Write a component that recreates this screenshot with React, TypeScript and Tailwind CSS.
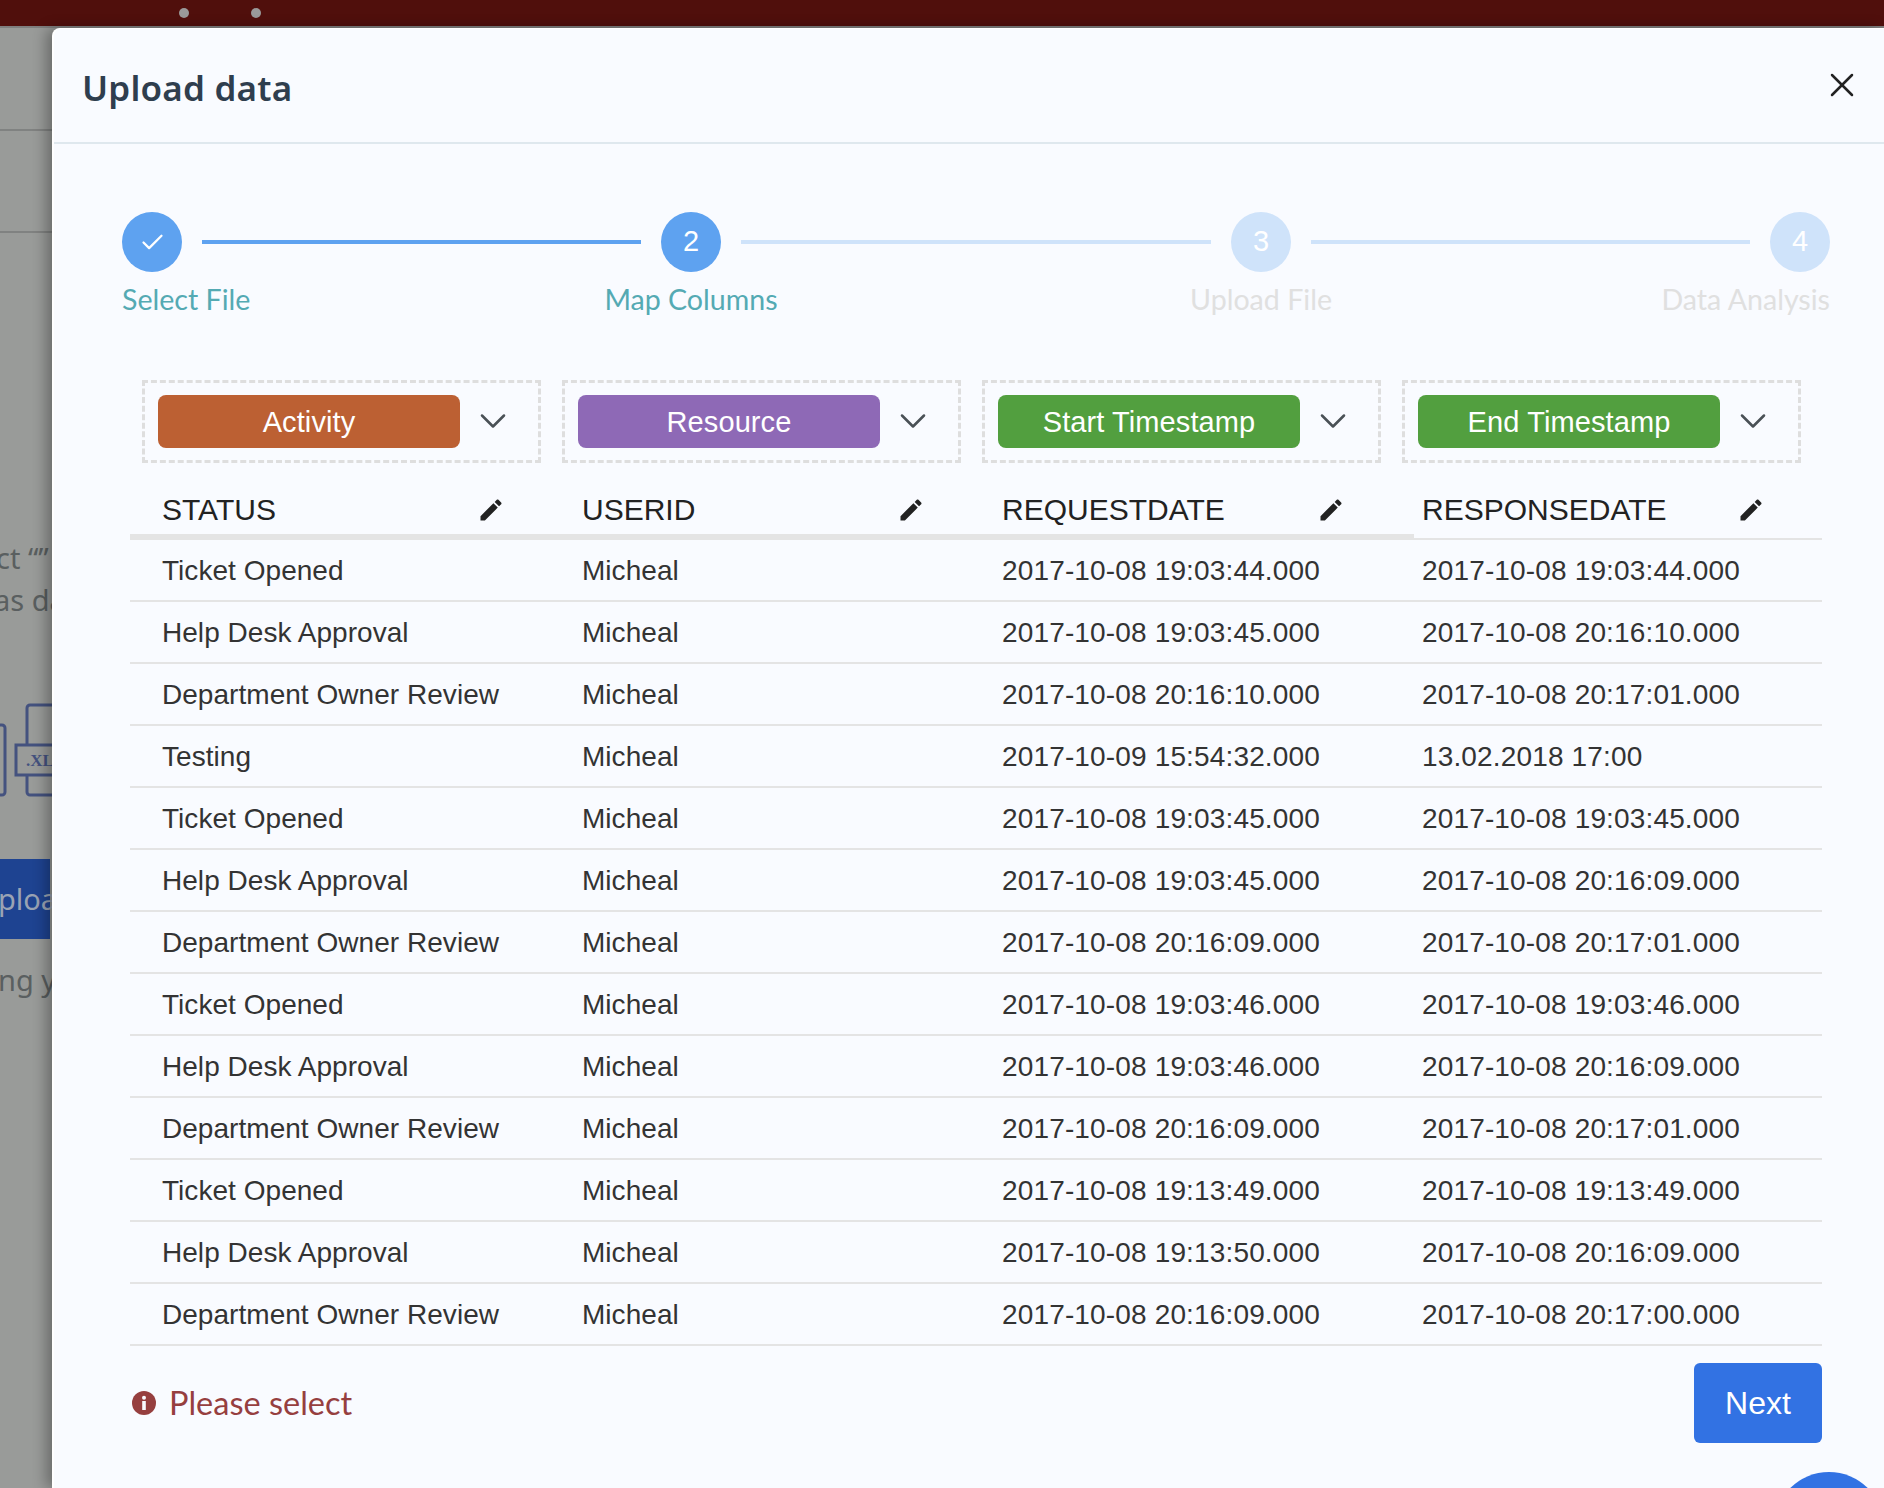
import { X, Check, ChevronDown } from "lucide-react";

const rows = [
  ["Ticket Opened", "2017-10-08 19:03:44.000", "2017-10-08 19:03:44.000"],
  ["Help Desk Approval", "2017-10-08 19:03:45.000", "2017-10-08 20:16:10.000"],
  ["Department Owner Review", "2017-10-08 20:16:10.000", "2017-10-08 20:17:01.000"],
  ["Testing", "2017-10-09 15:54:32.000", "13.02.2018 17:00"],
  ["Ticket Opened", "2017-10-08 19:03:45.000", "2017-10-08 19:03:45.000"],
  ["Help Desk Approval", "2017-10-08 19:03:45.000", "2017-10-08 20:16:09.000"],
  ["Department Owner Review", "2017-10-08 20:16:09.000", "2017-10-08 20:17:01.000"],
  ["Ticket Opened", "2017-10-08 19:03:46.000", "2017-10-08 19:03:46.000"],
  ["Help Desk Approval", "2017-10-08 19:03:46.000", "2017-10-08 20:16:09.000"],
  ["Department Owner Review", "2017-10-08 20:16:09.000", "2017-10-08 20:17:01.000"],
  ["Ticket Opened", "2017-10-08 19:13:49.000", "2017-10-08 19:13:49.000"],
  ["Help Desk Approval", "2017-10-08 19:13:50.000", "2017-10-08 20:16:09.000"],
  ["Department Owner Review", "2017-10-08 20:16:09.000", "2017-10-08 20:17:00.000"],
];

const mappings = [
  { label: "Activity", color: "bg-[#bc6033]" },
  { label: "Resource", color: "bg-[#8e69b6]" },
  { label: "Start Timestamp", color: "bg-[#529f3f]" },
  { label: "End Timestamp", color: "bg-[#529f3f]" },
];

const columns = ["STATUS", "USERID", "REQUESTDATE", "RESPONSEDATE"];

// Page that sits behind the modal, only a sliver of it shows
function Backdrop() {
  return (
    <div className="w-[52px] shrink-0 overflow-hidden font-['Noto_Sans',sans-serif] text-[29px] text-[#5a5f60] whitespace-nowrap">
      <div className="mt-[101px] h-[2px] bg-[#808281]" />
      <div className="mt-[100px] h-[2px] bg-[#808281]" />
      <div className="mt-[304px] -ml-[4px] h-[42px] leading-[42px]">ct “”</div>
      <div className="-ml-[6px] h-[42px] leading-[42px]">as da</div>
      <svg width="52" height="94" viewBox="0 0 52 94" className="mt-[82px] block" fill="none">
        <path d="M0 22h2a3 3 0 0 1 3 3v64a3 3 0 0 1-3 3H0" stroke="#44527f" strokeWidth="3" />
        <path d="M52 2H30a3 3 0 0 0-3 3v37M27 72v17a3 3 0 0 0 3 3h22" stroke="#44527f" strokeWidth="3" />
        <path d="M52 42H16v30h36" stroke="#44527f" strokeWidth="3" />
        <text x="26" y="63" fontFamily="Liberation Serif, serif" fontSize="17" fontWeight="700" fill="#44527f">
          .XL
        </text>
      </svg>
      <div className="mt-[62px] flex h-[80px] w-[50px] items-center bg-[#1e4391] text-[#9aa3b4]">
        <span className="-ml-[2px]">ploa</span>
      </div>
      <div className="mt-[20px] -ml-[2px] h-[42px] leading-[42px]">ng y</div>
    </div>
  );
}

function Stepper() {
  const stepClass = "flex h-[60px] w-[60px] shrink-0 items-center justify-center rounded-full text-[29px] font-light text-white";
  const labelClass = "mt-[7px] whitespace-nowrap font-['Lato',sans-serif] text-[28.6px] leading-[40px]";

  return (
    <div className="ml-[68px] mt-[68px] flex items-start">
      <div className="flex w-[60px] flex-col items-start">
        <div className={`${stepClass} bg-[#5ea2f0]`}>
          <Check size={27} strokeWidth={2} />
        </div>
        <div className={`${labelClass} text-[#54aab3]`}>Select File</div>
      </div>
      <div className="mx-[20px] mt-[28px] h-[4px] w-[439px] bg-[#5ea2f0]" />
      <div className="flex w-[60px] flex-col items-center">
        <div className={`${stepClass} bg-[#5ea2f0]`}>2</div>
        <div className={`${labelClass} text-[#54aab3]`}>Map Columns</div>
      </div>
      <div className="mx-[20px] mt-[28px] h-[4px] w-[470px] bg-[#cfe3fa]" />
      <div className="flex w-[60px] flex-col items-center">
        <div className={`${stepClass} bg-[#cfe3fa]`}>3</div>
        <div className={`${labelClass} text-[#e0e0e0]`}>Upload File</div>
      </div>
      <div className="mx-[20px] mt-[28px] h-[4px] w-[439px] bg-[#cfe3fa]" />
      <div className="flex w-[60px] flex-col items-end">
        <div className={`${stepClass} bg-[#cfe3fa]`}>4</div>
        <div className={`${labelClass} text-[#e0e0e0]`}>Data Analysis</div>
      </div>
    </div>
  );
}

export default function App() {
  return (
    <div className="relative flex h-[1488px] w-[1884px] flex-col overflow-hidden bg-[#999b99] font-['Liberation_Sans',sans-serif]">
      {/* Top bar */}
      <div className="flex h-[26px] shrink-0 items-center bg-[#500f0c] pl-[179px]">
        <span className="h-[10px] w-[10px] rounded-full bg-[#9a9a9a]" />
        <span className="ml-[62px] h-[10px] w-[10px] rounded-full bg-[#9a9a9a]" />
      </div>
      <div className="h-[2px] shrink-0 bg-[#7f7f7f]" />

      <div className="flex min-h-0 flex-1">
        <Backdrop />

        {/* Modal */}
        <div className="relative flex-1 rounded-tl-[8px] border-t border-l-2 border-white bg-[#f9fbff] shadow-[-6px_0_14px_rgba(0,0,0,0.3)]">
          <div className="flex h-[115px] items-center justify-between border-b-2 border-[#dfe8ee] pl-[28px] pr-[22px]">
            <h1 className="mt-[5px] font-['Noto_Sans',sans-serif] text-[35px] font-semibold tracking-[0.2px] text-[#2f3e4e]">
              Upload data
            </h1>
            <X size={40} strokeWidth={1.5} className="-mt-[2px] text-[#222]" />
          </div>

          <Stepper />

          {/* Column mapping */}
          <div className="ml-[88px] mt-[61px] flex gap-[21px]">
            {mappings.map((m) => (
              <div key={m.label} className="flex h-[83px] w-[399px] items-center border-[3px] border-dashed border-[#dedede] pl-[13px]">
                <div className={`flex h-[53px] w-[302px] items-center justify-center rounded-[8px] pt-[2px] text-[29px] tracking-[0.1px] text-white ${m.color}`}>
                  {m.label}
                </div>
                <ChevronDown size={44} strokeWidth={1.4} className="ml-[11px] -mt-[1px] text-[#4a5156]" />
              </div>
            ))}
          </div>

          {/* Data table */}
          <div className="ml-[76px] w-[1692px]">
            <div className="grid h-[71px] grid-cols-[420px_420px_420px_432px] items-center">
              {columns.map((c) => (
                <div key={c} className="flex w-[392px] items-center justify-between pl-[32px] pr-[17px] pt-[22px]">
                  <span className="text-[30px] text-[#222]">{c}</span>
                  <svg width="28" height="28" viewBox="0 0 24 24" fill="#222">
                    <path d="M3 17.25V21h3.75L17.81 9.94l-3.75-3.75L3 17.25zM20.71 7.04c.39-.39.39-1.02 0-1.41l-2.34-2.34c-.39-.39-1.02-.39-1.41 0l-1.83 1.83 3.75 3.75 1.83-1.83z" />
                  </svg>
                </div>
              ))}
            </div>
            <div className="h-[4px] w-[1284px] bg-[#e4e4e4]" />
            <div className="h-[2px] bg-[#e4e4e4]" />
            {rows.map((r, i) => (
              <div key={i} className="grid h-[62px] grid-cols-[420px_420px_420px_432px] items-center border-b-2 border-[#e4e4e4] pt-[2px] text-[28px] tracking-[0.04px] text-[#333]">
                <div className="pl-[32px]">{r[0]}</div>
                <div className="pl-[32px]">Micheal</div>
                <div className="pl-[32px] tracking-[0.15px]">{r[1]}</div>
                <div className="pl-[32px] tracking-[0.15px]">{r[2]}</div>
              </div>
            ))}

            <div className="mt-[17px] flex items-center justify-between">
              <div className="flex items-center gap-[13px] pl-[2px] font-['Lato',sans-serif] text-[32.5px] text-[#963f3f]">
                <svg width="24" height="24" viewBox="0 0 24 24">
                  <circle cx="12" cy="12" r="12" fill="#963f3f" />
                  <rect x="10.2" y="10" width="3.6" height="9" fill="#f9fbff" />
                  <circle cx="12" cy="6.8" r="2" fill="#f9fbff" />
                </svg>
                Please select
              </div>
              <button className="h-[80px] w-[128px] rounded-[6px] bg-[#3272e3] text-[32px] text-white">Next</button>
            </div>
          </div>
        </div>
      </div>

      {/* Floating help button, mostly cut off */}
      <div className="absolute left-[1774px] top-[1472px] h-[110px] w-[110px] rounded-full bg-[#3272e3]" />
    </div>
  );
}
